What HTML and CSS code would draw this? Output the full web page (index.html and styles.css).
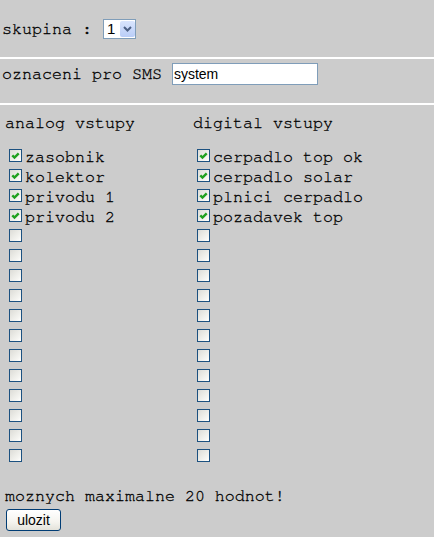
FILE: index.html
```html
<!DOCTYPE html>
<html>
<head>
<meta charset="utf-8">
<title>skupina</title>
<link rel="stylesheet" href="styles.css">
</head>
<body>
<div class="row row-group">
  <span class="lbl">skupina :</span>
  <div class="combo">
    <span class="combo-val">1</span>
    <span class="combo-btn"><svg width="15" height="16" viewBox="0 0 15 16"><polyline points="4,6 7.5,9.5 11,6" fill="none" stroke="#4d6185" stroke-width="2"/></svg></span>
  </div>
</div>
<div class="sep"></div>
<div class="row row-sms">
  <span class="lbl">oznaceni pro SMS</span>
  <input class="txt" type="text" value="system">
</div>
<div class="sep"></div>
<div class="cols">
  <div class="col">
    <div class="head">analog vstupy</div>
    <ul class="list">
      <li class="item"><span class="cb on"><svg width="11" height="11" viewBox="0 0 11 11"><polyline points="2.3,5.3 4.5,7.6 8.7,3.3" fill="none" stroke="#21a121" stroke-width="2.4"/></svg></span><span class="name">zasobnik</span></li>
      <li class="item"><span class="cb on"><svg width="11" height="11" viewBox="0 0 11 11"><polyline points="2.3,5.3 4.5,7.6 8.7,3.3" fill="none" stroke="#21a121" stroke-width="2.4"/></svg></span><span class="name">kolektor</span></li>
      <li class="item"><span class="cb on"><svg width="11" height="11" viewBox="0 0 11 11"><polyline points="2.3,5.3 4.5,7.6 8.7,3.3" fill="none" stroke="#21a121" stroke-width="2.4"/></svg></span><span class="name">privodu 1</span></li>
      <li class="item"><span class="cb on"><svg width="11" height="11" viewBox="0 0 11 11"><polyline points="2.3,5.3 4.5,7.6 8.7,3.3" fill="none" stroke="#21a121" stroke-width="2.4"/></svg></span><span class="name">privodu 2</span></li>
      <li class="item"><span class="cb"></span></li>
      <li class="item"><span class="cb"></span></li>
      <li class="item"><span class="cb"></span></li>
      <li class="item"><span class="cb"></span></li>
      <li class="item"><span class="cb"></span></li>
      <li class="item"><span class="cb"></span></li>
      <li class="item"><span class="cb"></span></li>
      <li class="item"><span class="cb"></span></li>
      <li class="item"><span class="cb"></span></li>
      <li class="item"><span class="cb"></span></li>
      <li class="item"><span class="cb"></span></li>
      <li class="item"><span class="cb"></span></li>
    </ul>
  </div>
  <div class="col">
    <div class="head">digital vstupy</div>
    <ul class="list">
      <li class="item"><span class="cb on"><svg width="11" height="11" viewBox="0 0 11 11"><polyline points="2.3,5.3 4.5,7.6 8.7,3.3" fill="none" stroke="#21a121" stroke-width="2.4"/></svg></span><span class="name">cerpadlo top ok</span></li>
      <li class="item"><span class="cb on"><svg width="11" height="11" viewBox="0 0 11 11"><polyline points="2.3,5.3 4.5,7.6 8.7,3.3" fill="none" stroke="#21a121" stroke-width="2.4"/></svg></span><span class="name">cerpadlo solar</span></li>
      <li class="item"><span class="cb on"><svg width="11" height="11" viewBox="0 0 11 11"><polyline points="2.3,5.3 4.5,7.6 8.7,3.3" fill="none" stroke="#21a121" stroke-width="2.4"/></svg></span><span class="name">plnici cerpadlo</span></li>
      <li class="item"><span class="cb on"><svg width="11" height="11" viewBox="0 0 11 11"><polyline points="2.3,5.3 4.5,7.6 8.7,3.3" fill="none" stroke="#21a121" stroke-width="2.4"/></svg></span><span class="name">pozadavek top</span></li>
      <li class="item"><span class="cb"></span></li>
      <li class="item"><span class="cb"></span></li>
      <li class="item"><span class="cb"></span></li>
      <li class="item"><span class="cb"></span></li>
      <li class="item"><span class="cb"></span></li>
      <li class="item"><span class="cb"></span></li>
      <li class="item"><span class="cb"></span></li>
      <li class="item"><span class="cb"></span></li>
      <li class="item"><span class="cb"></span></li>
      <li class="item"><span class="cb"></span></li>
      <li class="item"><span class="cb"></span></li>
      <li class="item"><span class="cb"></span></li>
    </ul>
  </div>
</div>
<p class="note">moznych maximalne 20 hodnot!</p>
<button class="btn" type="button">ulozit</button>
</body>
</html>
```
FILE: styles.css
```css
body {
  margin: 0;
  background: #cccccc;
  font-family: "Nimbus Mono PS", "Nimbus Mono L", "FreeMono", "Liberation Mono", monospace;
  font-size: 16.667px;
  color: #000;
}

.row {
  display: flex;
  align-items: flex-start;
  box-sizing: border-box;
  padding-left: 2px;
}

.lbl,
.head,
.name,
.note {
  -webkit-text-stroke: 0.3px #000;
}

.lbl {
  white-space: pre;
  line-height: 20px;
}

.row-group {
  height: 57px;
  padding-top: 19px;
}

.combo {
  margin-left: 11px;
  width: 33px;
  height: 20px;
  box-sizing: border-box;
  border: 1px solid #7f9db9;
  background: #fff;
  display: flex;
  align-items: stretch;
}

.combo-val {
  flex: 1;
  font-family: "Liberation Sans", Arial, sans-serif;
  font-size: 15px;
  line-height: 18px;
  padding-left: 3px;
}

.combo-btn {
  width: 15px;
  margin: 1px 0 0 0;
  height: 16px;
  border-radius: 2px;
  background: linear-gradient(#d9e5fd, #b9cdf7);
  display: flex;
}

.sep {
  height: 2px;
  background: #fff;
}

.row-sms {
  height: 44px;
  padding-top: 4px;
}

.row-sms .lbl {
  line-height: 22px;
}

.txt {
  margin: 0 0 0 10px;
  width: 146px;
  height: 22px;
  box-sizing: border-box;
  border: 1px solid #7f9db9;
  padding: 0 1px;
  background: #fff;
  font-family: "Liberation Sans", Arial, sans-serif;
  font-size: 14px;
  color: #000;
  outline: none;
}

.cols {
  display: flex;
  padding: 8px 0 0 5px;
}

.col {
  width: 188px;
}

.head {
  height: 20px;
  line-height: 20px;
  white-space: pre;
}

.list {
  margin: 13px 0 0;
  padding: 0;
  list-style: none;
}

.item {
  display: flex;
  align-items: flex-start;
  height: 20px;
}

.cb {
  width: 13px;
  height: 13px;
  box-sizing: border-box;
  border: 1px solid #1c5180;
  margin: 3px 3px 0 4px;
  background: linear-gradient(135deg, #dcdcd7 0%, #f4f4f0 70%, #ffffff 100%);
  display: flex;
}

.name {
  line-height: 20px;
  padding-top: 1px;
  white-space: pre;
}

.note {
  margin: 20px 0 0 5px;
  line-height: 20px;
}

.btn {
  display: block;
  margin: 3px 0 0 6px;
  width: 55px;
  height: 22px;
  box-sizing: border-box;
  border: 1px solid #003c74;
  border-radius: 3px;
  background: linear-gradient(#ffffff 0%, #f5f4ef 60%, #e3e2da 100%);
  font-family: "Liberation Sans", Arial, sans-serif;
  font-size: 14px;
  color: #000;
  padding: 0;
}
```
